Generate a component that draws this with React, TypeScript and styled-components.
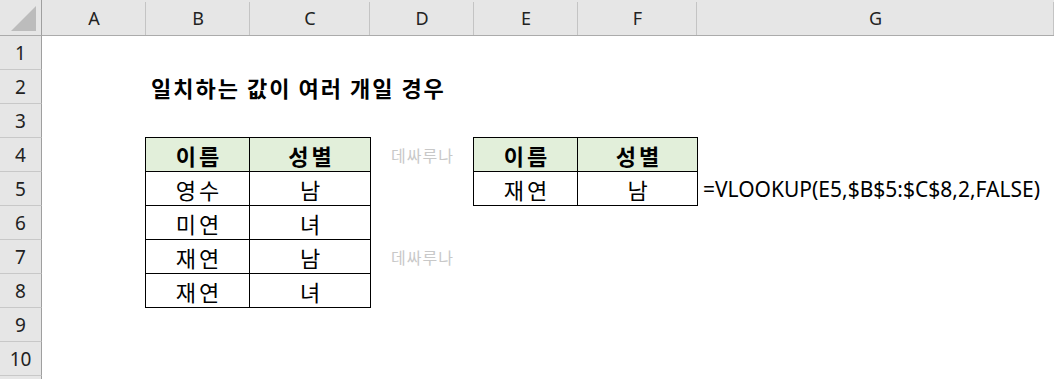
import React from 'react';
import styled, { createGlobalStyle } from 'styled-components';

const COLUMNS = ['A', 'B', 'C', 'D', 'E', 'F', 'G'];
const ROW_COUNT = 10;

const sourceRows = [
  ['영수', '남'],
  ['미연', '녀'],
  ['재연', '남'],
  ['재연', '녀'],
];

const GlobalStyle = createGlobalStyle`
  html, body {
    margin: 0;
    padding: 0;
    background: #fff;
    overflow: hidden;
  }
  body {
    font-family: "Noto Sans CJK KR", "Noto Sans", sans-serif;
    color: #000;
  }
`;

const Sheet = styled.div`
  display: grid;
  grid-template-columns: 42px 104px 104px 120px 104px 104px 119px 1fr;
  grid-template-rows: 36px repeat(${ROW_COUNT + 1}, 34px);
  width: 1054px;
  height: 379px;
  overflow: hidden;
  background: #fff;
`;

const Corner = styled.div`
  grid-column: 1;
  grid-row: 1;
  background: #e6e6e6;
  border-right: 1px solid #9f9f9f;
  border-bottom: 1px solid #ababab;
  position: relative;

  &::after {
    content: '';
    position: absolute;
    right: 5px;
    bottom: 4px;
    border-style: solid;
    border-width: 0 0 25px 25px;
    border-color: transparent transparent #bcbcbc transparent;
  }
`;

const ColHeader = styled.div<{ $col: number }>`
  grid-column: ${(p) => p.$col};
  grid-row: 1;
  display: flex;
  align-items: center;
  justify-content: center;
  background: #e6e6e6;
  border-bottom: 1px solid #ababab;
  font-family: "Noto Sans", sans-serif;
  font-size: 18px;
  color: #222;
  position: relative;

  &::after {
    content: '';
    position: absolute;
    right: 0;
    top: 2px;
    bottom: 0;
    width: 1px;
    background: #c4c4c4;
  }
`;

const RowHeader = styled.div<{ $row: number }>`
  grid-column: 1;
  grid-row: ${(p) => p.$row};
  display: flex;
  align-items: center;
  justify-content: center;
  background: #e6e6e6;
  border-right: 1px solid #9f9f9f;
  border-bottom: 1px solid #c8c8c8;
  font-family: "Noto Sans", sans-serif;
  font-size: 19px;
  color: #222;
`;

const Cell = styled.div<{ $col: number; $row: number; $span?: number }>`
  grid-column: ${(p) => `${p.$col} / span ${p.$span ?? 1}`};
  grid-row: ${(p) => p.$row};
  display: flex;
  align-items: center;
  min-width: 0;
  white-space: nowrap;
`;

const Title = styled(Cell)`
  padding-left: 5px;
  font-size: 22px;
  font-weight: 700;
  letter-spacing: 2px;
`;

const Watermark = styled(Cell)`
  justify-content: center;
  padding-left: 1px;
  font-size: 16px;
  letter-spacing: 1px;
  color: #c8c8c8;
`;

const Formula = styled(Cell)`
  padding-left: 6px;
  font-family: "Noto Sans", "Noto Sans CJK KR", sans-serif;
  font-size: 21px;
`;

const TableArea = styled.div<{ $col: number; $row: number; $rows: number }>`
  grid-column: ${(p) => `${p.$col} / span 2`};
  grid-row: ${(p) => `${p.$row} / span ${p.$rows}`};
  margin: -1px 0 0 -1px;
`;

const DataTable = styled.table`
  border-collapse: collapse;
  table-layout: fixed;
  width: calc(100% + 1px);

  th,
  td {
    height: 33px;
    padding: 0 0 0 3px;
    border: 1px solid #000;
    text-align: center;
    vertical-align: middle;
    font-size: 22px;
    letter-spacing: 3px;
    line-height: 1;
  }

  th {
    background: #e2efda;
    font-weight: 700;
  }
`;

const HeadRow = () => (
  <tr>
    <th>이름</th>
    <th>성별</th>
  </tr>
);

const App: React.FC = () => {
  const rows = Array.from({ length: ROW_COUNT }, (_, i) => i + 1);

  return (
    <>
      <GlobalStyle />
      <Sheet>
        <Corner />
        {COLUMNS.map((c, i) => (
          <ColHeader key={c} $col={i + 2}>
            {c}
          </ColHeader>
        ))}
        {rows.map((r) => (
          <RowHeader key={r} $row={r + 1}>
            {r}
          </RowHeader>
        ))}
        {/* next row's header, only its top edge shows */}
        <RowHeader $row={ROW_COUNT + 2} />

        <Title $col={3} $row={3} $span={4}>
          일치하는 값이 여러 개일 경우
        </Title>

        <TableArea $col={3} $row={5} $rows={5}>
          <DataTable>
            <colgroup>
              <col style={{ width: 104 }} />
              <col />
            </colgroup>
            <thead>
              <HeadRow />
            </thead>
            <tbody>
              {sourceRows.map(([name, gender], i) => (
                <tr key={i}>
                  <td>{name}</td>
                  <td>{gender}</td>
                </tr>
              ))}
            </tbody>
          </DataTable>
        </TableArea>

        <Watermark $col={5} $row={5}>
          데싸루나
        </Watermark>
        <Watermark $col={5} $row={8}>
          데싸루나
        </Watermark>

        <TableArea $col={6} $row={5} $rows={2}>
          <DataTable>
            <colgroup>
              <col style={{ width: 104 }} />
              <col />
            </colgroup>
            <thead>
              <HeadRow />
            </thead>
            <tbody>
              <tr>
                <td>재연</td>
                <td>남</td>
              </tr>
            </tbody>
          </DataTable>
        </TableArea>

        <Formula $col={8} $row={6}>
          =VLOOKUP(E5,$B$5:$C$8,2,FALSE)
        </Formula>
      </Sheet>
    </>
  );
};

export default App;
